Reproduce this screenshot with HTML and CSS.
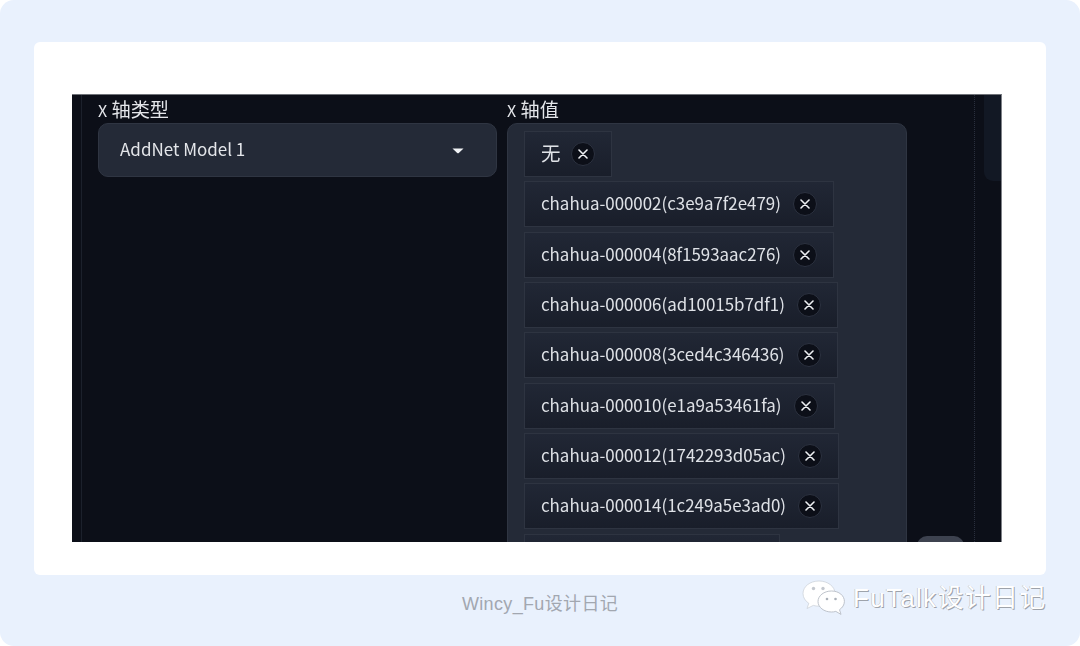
FILE: index.html
```html
<!DOCTYPE html>
<html lang="zh">
<head>
<meta charset="utf-8">
<title>X 轴值</title>
<link rel="stylesheet" href="styles.css">
</head>
<body>
<div class="frame">
  <main class="card">
    <div class="shot">
      <div class="rail"></div>
      <section class="col col-type">
        <div class="label"><span class="x">X</span> 轴类型</div>
        <div class="select">
          <span>AddNet Model 1</span>
          <svg class="caret" width="12" height="6" viewBox="0 0 12 6"><path d="M0.5 0.5h11L6.8 5a1.2 1.2 0 0 1-1.6 0z" fill="#f1f3f6"/></svg>
        </div>
      </section>
      <section class="col col-values">
        <div class="label"><span class="x">X</span> 轴值</div>
        <div class="tags">
          <div class="chip chip-cjk"><span>无</span><button class="close"><svg width="10" height="10" viewBox="0 0 10 10"><path d="M1 1l8 8M9 1l-8 8"/></svg></button></div>
          <div class="chip"><span>chahua-000002(c3e9a7f2e479)</span><button class="close"><svg width="10" height="10" viewBox="0 0 10 10"><path d="M1 1l8 8M9 1l-8 8"/></svg></button></div>
          <div class="chip"><span>chahua-000004(8f1593aac276)</span><button class="close"><svg width="10" height="10" viewBox="0 0 10 10"><path d="M1 1l8 8M9 1l-8 8"/></svg></button></div>
          <div class="chip"><span>chahua-000006(ad10015b7df1)</span><button class="close"><svg width="10" height="10" viewBox="0 0 10 10"><path d="M1 1l8 8M9 1l-8 8"/></svg></button></div>
          <div class="chip"><span>chahua-000008(3ced4c346436)</span><button class="close"><svg width="10" height="10" viewBox="0 0 10 10"><path d="M1 1l8 8M9 1l-8 8"/></svg></button></div>
          <div class="chip"><span>chahua-000010(e1a9a53461fa)</span><button class="close"><svg width="10" height="10" viewBox="0 0 10 10"><path d="M1 1l8 8M9 1l-8 8"/></svg></button></div>
          <div class="chip"><span>chahua-000012(1742293d05ac)</span><button class="close"><svg width="10" height="10" viewBox="0 0 10 10"><path d="M1 1l8 8M9 1l-8 8"/></svg></button></div>
          <div class="chip"><span>chahua-000014(1c249a5e3ad0)</span><button class="close"><svg width="10" height="10" viewBox="0 0 10 10"><path d="M1 1l8 8M9 1l-8 8"/></svg></button></div>
          <div class="chip chip-last"></div>
        </div>
      </section>
      <div class="pill"></div>
      <div class="dotted"></div>
      <div class="side"></div>
    </div>
  </main>
  <footer class="caption">Wincy_Fu设计日记</footer>
  <div class="mark">
    <svg class="wechat" width="44" height="36" viewBox="0 0 44 36">
      <path d="M17 1C8 1 1 6.500 1 13.500c0 4 2.300 7.500 5.800 9.800L5 28.500l6.300-3.100c1.800.5 3.700.8 5.700.8 8.800 0 16-5.700 16-12.700S25.800 1 17 1z" fill="#fff" stroke="#c9ced6" stroke-width=".7"/>
      <path d="M29.500 11C22 11 16 15.700 16 21.500S22 32 29.500 32c1.500 0 3-.2 4.300-.6l5.200 3-1.500-4.700c3-2 4.900-5 4.900-8.200C42.500 15.700 37 11 29.500 11z" fill="#fff" stroke="#b7bcc5" stroke-width=".9"/>
      <circle cx="11.500" cy="8.500" r="1.700" fill="#c4c8cf"/>
      <circle cx="21" cy="8.500" r="1.700" fill="#c4c8cf"/>
      <circle cx="25" cy="19" r="1.300" fill="#aab0b9"/>
      <circle cx="33.500" cy="19" r="1.300" fill="#aab0b9"/>
    </svg>
    <span class="mark-text">FuTalk设计日记</span>
  </div>
</div>
</body>
</html>
```

FILE: styles.css
```css
* { box-sizing: border-box; }
html, body { margin: 0; padding: 0; background: #fff; }
body { width: 1080px; height: 646px; overflow: hidden; font-family: "Noto Sans CJK SC", sans-serif; }

.frame {
  position: relative;
  width: 1080px;
  height: 646px;
  padding: 42px 34px 0;
  background: #e9f1fd;
  border-radius: 14px;
}
.card {
  height: 533px;
  padding: 52px 44px 33px 38px;
  background: #fff;
  border-radius: 6px;
}
.shot {
  display: flex;
  position: relative;
  height: 448px;
  overflow: hidden;
  background: #0c0f18;
  border-top: 1px solid #6f7278;
  border-right: 1px solid #7e8187;
  color: #e8eaee;
  filter: blur(0.35px);
}
.rail { width: 1px; margin-left: 9px; background: #1c212c; flex: none; }
.col { flex: none; display: flex; flex-direction: column; }
.col-type { width: 399px; margin-left: 16px; }
.col-values { width: 400px; margin-left: 10px; }
.label {
  flex: none;
  height: 28px;
  padding-top: 1px;
  font-size: 19.200px;
  line-height: 26px;
  color: #e4e6ea;
  white-space: nowrap;
}
.label .x { font-size: 16px; }
.select {
  display: flex;
  flex: none;
  align-items: center;
  justify-content: space-between;
  height: 54px;
  padding: 0 32px 3px 21px;
  background: #242a37;
  border: 1px solid #2f3542;
  border-radius: 10px;
  font-size: 17px;
  color: #e4e6ea;
}
.caret { flex: none; margin-top: 5px; }
.tags {
  display: flex;
  flex: none;
  flex-direction: column;
  align-items: flex-start;
  gap: 4.330px;
  height: 460px;
  padding: 7px 0 0 16px;
  background: #242a37;
  border: 1px solid #2f3542;
  border-radius: 10px;
}
.chip {
  display: flex;
  flex: none;
  align-items: center;
  gap: 12px;
  height: 46px;
  padding: 0 16px;
  background: linear-gradient(#212735, #191e2a);
  border: 1px solid #2e3441;
  font-size: 16.900px;
  line-height: 26px;
  color: #dfe2e7;
  white-space: nowrap;
}
.chip > span { padding-bottom: 2px; }
.chip-cjk { gap: 10px; font-size: 19.500px; }
.chip-last { width: 256px; }
.close {
  display: flex;
  align-items: center;
  justify-content: center;
  flex: none;
  width: 24px;
  height: 24px;
  padding: 0;
  background: #0c0f18;
  border: 1px solid #2c3240;
  border-radius: 50%;
}
.close path { stroke: #eef0f3; stroke-width: 1.600; fill: none; stroke-linecap: round; }
.pill {
  position: absolute;
  left: 845px;
  top: 441px;
  width: 47px;
  height: 24px;
  background: #3d424f;
  border-radius: 10px;
}
.dotted {
  position: absolute;
  left: 902px;
  top: 0;
  bottom: 0;
  border-left: 1px dotted #2a2f3d;
}
.side {
  position: absolute;
  right: 0;
  top: -10px;
  width: 17px;
  height: 96px;
  background: #121824;
  border-radius: 0 0 0 9px;
}
.caption {
  margin-top: 17px;
  text-align: center;
  font-family: "Liberation Sans", "Noto Sans CJK SC", sans-serif;
  font-size: 18px;
  letter-spacing: 0.350px;
  line-height: 24px;
  color: #a2a7b0;
}
.mark {
  position: absolute;
  left: 802px;
  top: 580px;
  display: flex;
  align-items: center;
  gap: 7px;
}
.wechat { flex: none; }
.mark-text {
  font-family: "Liberation Sans", "Noto Sans CJK SC", sans-serif;
  font-size: 26px;
  line-height: 36px;
  letter-spacing: 1.300px;
  color: #fff;
  text-shadow: 1px 1px 0 #9ea3ab, -0.500px 0 0 #b5b9c0;
  white-space: nowrap;
}
```
